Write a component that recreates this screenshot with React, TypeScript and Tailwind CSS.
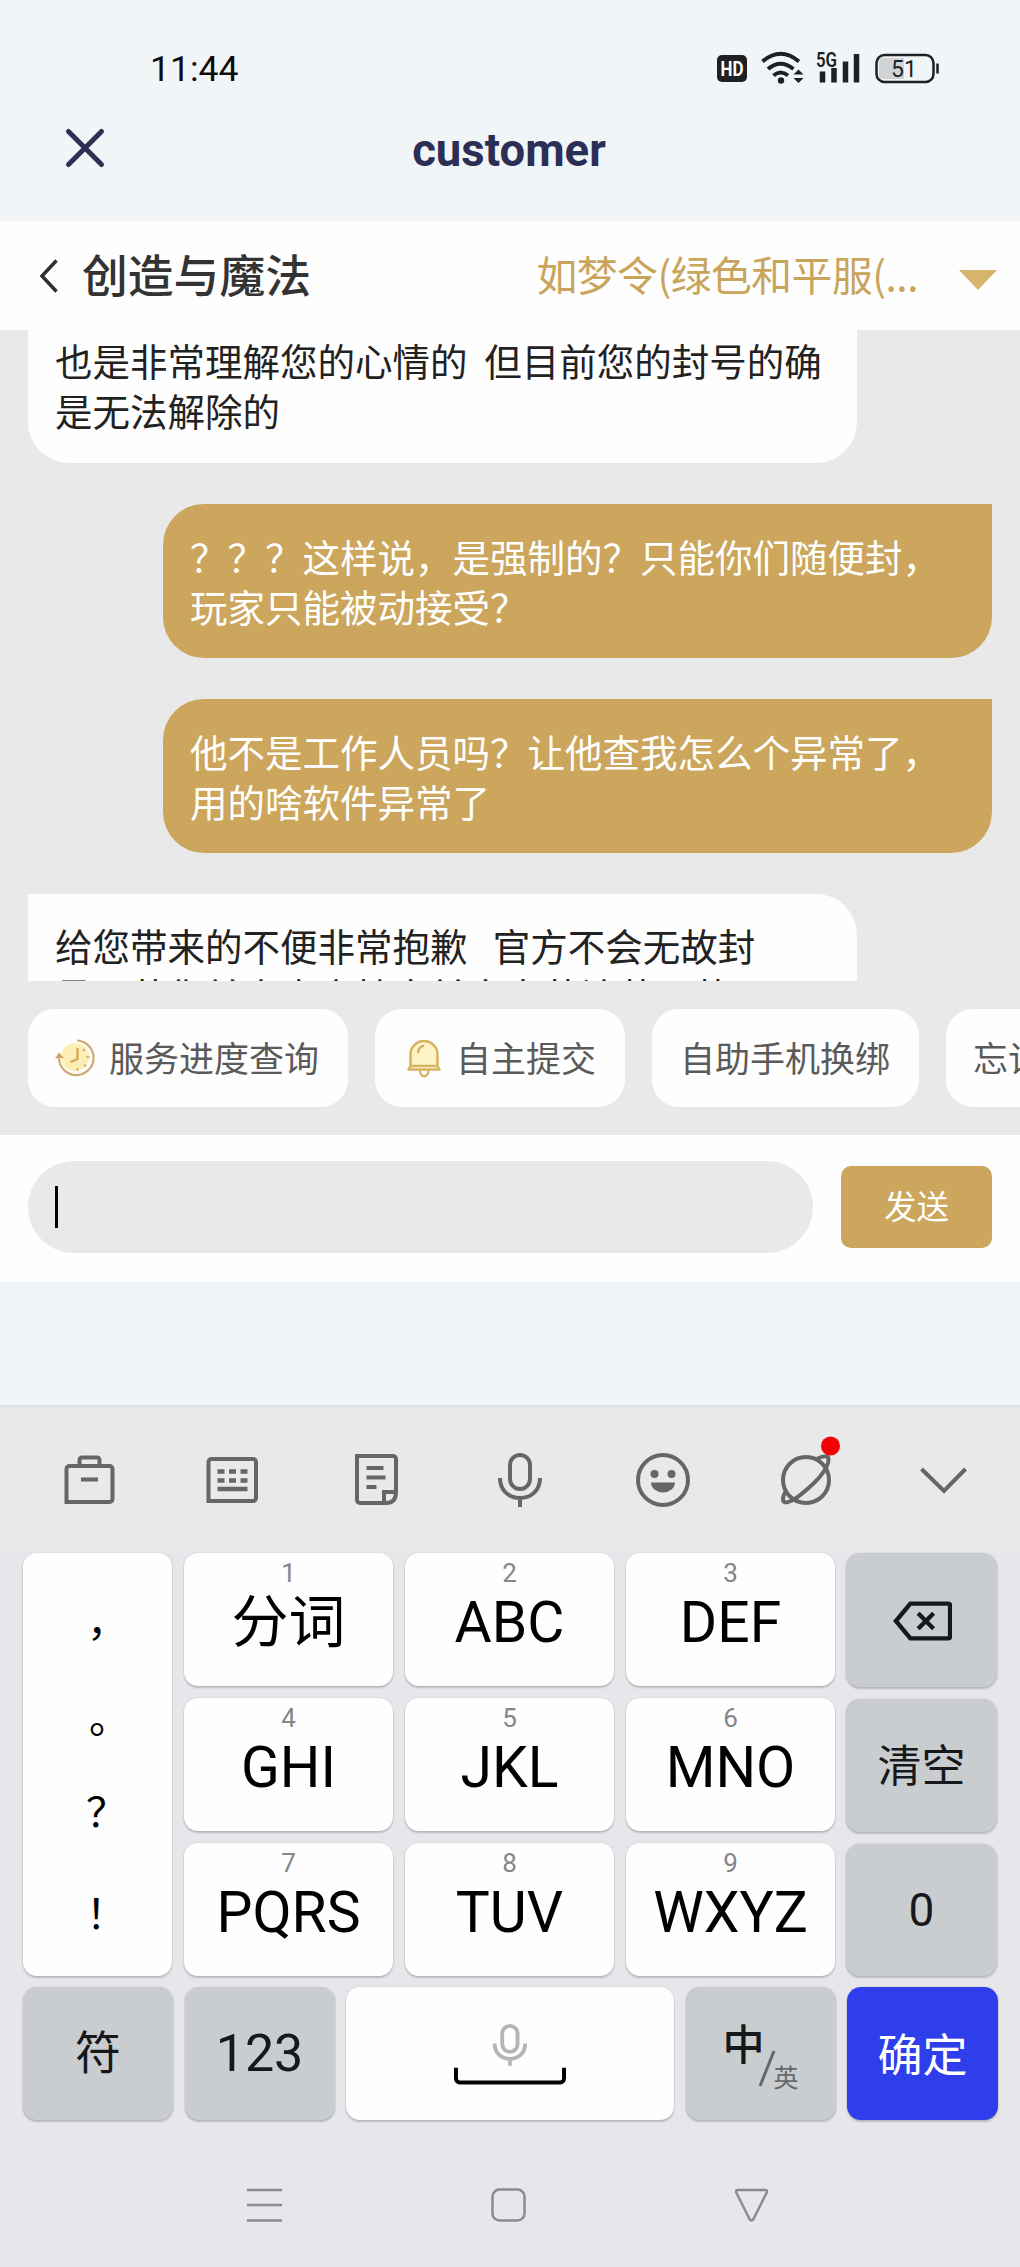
import type { ReactNode } from 'react'

const CJK = "font-['Noto_Sans_CJK_SC',sans-serif]"

interface Message {
  from: 'agent' | 'user'
  lines: string[]
}

const messages: Message[] = [
  { from: 'agent', lines: ['也是非常理解您的心情的\u00a0 但目前您的封号的确', '是无法解除的'] },
  { from: 'user', lines: ['？？？这样说，是强制的？只能你们随便封，', '玩家只能被动接受？'] },
  { from: 'user', lines: ['他不是工作人员吗？让他查我怎么个异常了，', '用的啥软件异常了'] },
  { from: 'agent', lines: ['给您带来的不便非常抱歉\u00a0 \u00a0官方不会无故封', '号，若您并方官方核实前字定若该若，若'] },
]

const letterKeys = [
  ['1', '分词'], ['2', 'ABC'], ['3', 'DEF'],
  ['4', 'GHI'], ['5', 'JKL'], ['6', 'MNO'],
  ['7', 'PQRS'], ['8', 'TUV'], ['9', 'WXYZ'],
]

function StatusBar() {
  return (
    <div className="flex h-[112px] items-start justify-between pl-[150px] pr-[81px] pt-[46px]">
      <span className="mt-[1px] text-[35.500px] leading-[44px] text-[#0c0d0e]">11:44</span>
      <svg width="224" height="44" viewBox="0 0 224 44" fill="none">
        <rect x="2" y="9" width="30" height="27" rx="5" fill="#1d2122" />
        <text x="17" y="29.500" textAnchor="middle" fontSize="20" fontWeight="700" fill="#fff" textLength="23" lengthAdjust="spacingAndGlyphs">HD</text>
        <g stroke="#1d2122" strokeWidth="4">
          <path d="M47.500 15.500Q65.500 0 84 15.500" />
          <path d="M53 23Q65.500 12.500 78.500 23" />
          <path d="M58.500 29.500Q65.500 23.500 73 29.500" />
        </g>
        <circle cx="66" cy="34.500" r="3.200" fill="#1d2122" />
        <path d="M78.500 28.500l5-5 5 5zM78.500 32l5 5 5-5z" fill="#1d2122" />
        <text x="101" y="20.500" fontSize="20" fontWeight="600" fill="#1d2122" textLength="21" lengthAdjust="spacingAndGlyphs">5G</text>
        <path d="M107.500 25.500v11M119 22v14.500M130.500 15.500v21M141.500 8v28.500" stroke="#1d2122" strokeWidth="5.500" />
        <rect x="161.500" y="9" width="57" height="27" rx="8" stroke="#1d2122" strokeWidth="2.500" />
        <path d="M168 12h21v21h-21a4 4 0 0 1-4-4v-13a4 4 0 0 1 4-4z" fill="#d0d3d6" />
        <text x="189" y="30.500" textAnchor="middle" fontSize="23" fill="#1d2122">51</text>
        <path d="M222.500 17.500v10" stroke="#1d2122" strokeWidth="2.500" />
      </svg>
    </div>
  )
}

function TitleBar() {
  return (
    <div className="grid h-[109px] grid-cols-[119px_1fr_121px] items-start">
      <svg className="ml-[64px] mt-[15px]" width="42" height="42" viewBox="0 0 42 42" fill="none" stroke="#2e3051" strokeWidth="5" strokeLinecap="round">
        <path d="M4.500 4.500l33 33M37.500 4.500l-33 33" />
      </svg>
      <h1 className="mt-[11px] text-center font-['Roboto',sans-serif] text-[45.500px] leading-[56px] font-bold text-[#2b2e55]">customer</h1>
    </div>
  )
}

function GameBar() {
  return (
    <div className={`${CJK} flex h-[109px] items-center bg-[#fefefe] pl-[39px] pr-[22px]`}>
      <svg width="20" height="36" viewBox="0 0 20 36" fill="none" stroke="#303030" strokeWidth="3.500">
        <path d="M17.500 2.500L3 18l14.500 15.500" />
      </svg>
      <span className="mt-[-5px] ml-[23px] text-[45.800px] leading-[60px] font-medium text-[#333]">创造与魔法</span>
      <span className="mt-[-4px] ml-auto text-[40.800px] leading-[60px] tracking-[-0.5px] text-[#c9a55c]">如梦令(绿色和平服(...</span>
      <svg className="ml-[40px] mt-[8px]" width="40" height="20" viewBox="0 0 40 20">
        <path d="M1 0h38L20 20z" fill="#d7b46d" />
      </svg>
    </div>
  )
}

function Bubble({ message }: { message: Message }) {
  const isUser = message.from === 'user'
  return (
    <div
      className={`w-[829px] shrink-0 px-[27px] text-[37.500px] leading-[50px] whitespace-nowrap first:pt-[76px] ${
        isUser
          ? 'self-end rounded-[41px] rounded-tr-none bg-[#cba65c] py-[27px] text-white'
          : 'self-start rounded-[41px] rounded-tl-none bg-[#fefefe] pt-[26px] pb-[28px] text-[#222]'
      }`}
    >
      {message.lines.map((line) => (
        <div key={line} className="h-[50px]">{line}</div>
      ))}
    </div>
  )
}

function HistoryIcon() {
  return (
    <svg width="42" height="42" viewBox="0 0 42 42" fill="none">
      <circle cx="20" cy="20" r="14" fill="#fdeeb5" />
      <path d="M22 3.500a17.300 17.300 0 1 1-18 18" stroke="#cfa96d" strokeWidth="2.200" />
      <path d="M0 21.500l4-6 5 5.500z" fill="#cfa469" />
      <path d="M22.500 11v11l-7 3" stroke="#d3a956" strokeWidth="2.400" />
      <path d="M30 12l-2 2M34.500 20h-3M31 29.500l-2-2M22.500 34v-3" stroke="#d3b071" strokeWidth="2" />
    </svg>
  )
}

function BellIcon() {
  return (
    <svg width="36" height="42" viewBox="0 0 36 42" fill="none">
      <path d="M4.500 31V17.500a13.500 13.500 0 0 1 27 0V31" fill="#fdf3c6" stroke="#d6b45f" strokeWidth="2.500" />
      <path d="M12 16a8 8 0 0 1 6-7.500" stroke="#cfa35c" strokeWidth="2" />
      <path d="M2.500 32.500h31l-2-3.500h-27z" fill="#fffbe9" stroke="#d6b45f" strokeWidth="2.500" strokeLinejoin="round" />
      <path d="M14 33.500c0 7.500 8.500 7.500 8.500 0" stroke="#d6b45f" strokeWidth="2.500" />
    </svg>
  )
}

function Chip({ width, icon, label }: { width: string; icon?: ReactNode; label: string }) {
  return (
    <button className={`${width} flex h-[98px] shrink-0 items-center rounded-[27px] bg-[#fefefe] text-[35px] leading-[50px] whitespace-nowrap text-[#5a5a5a]`}>
      {icon}
      <span className="mt-[-3px]">{label}</span>
    </button>
  )
}

function InputBar() {
  return (
    <div className={`${CJK} flex h-[147px] items-center gap-[28px] bg-[#fefefe] px-[28px]`}>
      <div className="mt-[-3px] flex h-[92px] flex-1 items-center rounded-full bg-[#e9e9e9] pl-[27px]">
        <div className="h-[42px] w-[3px] bg-black" />
      </div>
      <button className="mt-[-3px] h-[82px] w-[151px] rounded-[10px] bg-[#cba65c] pb-1 text-[32.600px] text-white">发送</button>
    </div>
  )
}

function MicPaths() {
  return (
    <>
      <rect x="20" y="5" width="20" height="34" rx="10" />
      <path d="M10 28c0 13 9.500 20 20 20s20-7 20-20M30 48v9" />
    </>
  )
}

function ToolIcon({ children }: { children: ReactNode }) {
  return (
    <button className="flex justify-center">
      <svg width="60" height="60" viewBox="0 0 60 60" fill="none" stroke="#666" strokeWidth="4" className="mt-[-1px] overflow-visible">
        {children}
      </svg>
    </button>
  )
}

function Toolbar() {
  return (
    <div className="grid h-[148px] grid-cols-[repeat(6,143.500px)_130px] items-center border-t-2 border-[#dcdfe3] bg-[#e9e9e9] pl-[17px]">
      <ToolIcon>
        <path d="M7.500 52V19a3 3 0 0 1 3-3h40a3 3 0 0 1 3 3v30a3 3 0 0 1-3 3zM20.500 16v-6a2.500 2.500 0 0 1 2.500-2.500h15a2.500 2.500 0 0 1 2.500 2.500v6M22 29.500h17" />
      </ToolIcon>
      <ToolIcon>
        <path d="M6.500 51V12a3 3 0 0 1 3-3h41.500a3 3 0 0 1 3 3v36a3 3 0 0 1-3 3z" />
        <path d="M15.500 21.500h30M15.500 30.500h30" strokeWidth="4.500" strokeDasharray="7 4.500" />
        <path d="M15.500 39h30" strokeWidth="4.500" />
      </ToolIcon>
      <ToolIcon>
        <path d="M11 6h36a3 3 0 0 1 3 3v33q0 11-10 11H14a3 3 0 0 1-3-3zM50 42H38v11M20.500 18h17M20.500 27.500h19M20.500 37h10" />
      </ToolIcon>
      <ToolIcon>
        <g transform="translate(1 0)">
          <MicPaths />
        </g>
      </ToolIcon>
      <ToolIcon>
        <circle cx="30" cy="30" r="25" />
        <g fill="#666" stroke="none">
          <circle cx="21.500" cy="24" r="4" />
          <circle cx="38.500" cy="24" r="4" />
          <path d="M18 32.500h24a12 10 0 0 1-24 0z" />
        </g>
      </ToolIcon>
      <ToolIcon>
        <circle cx="30" cy="30" r="23" />
        <path d="M41 9c5-3 11-4 11.500 0 .5 6-6 16-14.500 24S21 48 16 50.500c-6 3-9 2.500-9-1.500 0-3 1-5 3-8" />
        <circle cx="54.500" cy="-4" r="9.500" fill="#f40006" stroke="none" />
      </ToolIcon>
      <ToolIcon>
        <path d="M8.500 19L31 41l21.500-22" />
      </ToolIcon>
    </div>
  )
}

const keyBase = 'flex items-center justify-center rounded-[14px] shadow-[0_2px_2px_rgba(0,0,0,0.18),0_0_2px_rgba(0,0,0,0.14)]'
const grayKey = `${keyBase} bg-[#cacdd0] text-[#17181b]`
const whiteKey = `${keyBase} bg-[#fefefe] text-black`

function Keyboard() {
  return (
    <div className={`font-[Roboto,'Noto_Sans_CJK_SC',sans-serif] flex flex-col gap-[11px] pl-[23px] pr-[22px]`}>
      <div className="flex h-[423px] gap-[12px]">
        <div className={`${whiteKey} ${CJK} w-[149px] flex-col text-[41px] leading-none`}>
          <span className="mt-[10px] h-[97px] translate-x-[10px]">，</span>
          <span className="h-[94px] translate-x-[12px]">。</span>
          <span className="h-[102px] translate-x-[9px]">？</span>
          <span className="h-[51px] translate-x-[9px]">！</span>
        </div>
        <div className="grid w-[651px] grid-cols-3 grid-rows-3 gap-x-[12px] gap-y-[12px]">
          {letterKeys.map(([digit, label]) => (
            <button key={digit} className={`${whiteKey} flex-col justify-start`}>
              <span className="mt-[6px] text-[26px] leading-[28px] text-[#85858a]">{digit}</span>
              <span className="mt-[2px] text-[57px] leading-[68px]">{label}</span>
            </button>
          ))}
        </div>
        <div className="ml-[-1px] flex w-[151px] flex-col gap-[12px]">
          <button className={`${grayKey} flex-1 pt-[2px]`}>
            <svg width="60" height="42" viewBox="0 0 62 42" fill="none" stroke="#17181b" strokeWidth="4.500">
              <path d="M19 3h39a2 2 0 0 1 2 2v32a2 2 0 0 1-2 2H19L4 21z" />
              <path d="M27 13l16 16M43 13L27 29" />
            </svg>
          </button>
          <button className={`${grayKey} flex-1 pt-[2px] text-[44px]`}>清空</button>
          <button className={`${grayKey} flex-1 text-[46px]`}>0</button>
        </div>
      </div>
      <div className="flex h-[133px] gap-[11.500px]">
        <button className={`${grayKey} w-[150px] text-[46px]`}>符</button>
        <button className={`${grayKey} w-[150px] text-[52px]`}>123</button>
        <button className={`${whiteKey} flex-1`}>
          <svg width="112" height="66" viewBox="0 0 114 66" fill="none">
            <g transform="translate(33.500 .5) scale(.78)" stroke="#b5b5b7" strokeWidth="5">
              <MicPaths />
            </g>
            <path d="M2 47v11a4 4 0 0 0 4 4h102a4 4 0 0 0 4-4V47" stroke="#000" strokeWidth="4" />
          </svg>
        </button>
        <button className={`${grayKey} relative w-[150px]`}>
          <span className="absolute top-[34px] left-[37px] text-[42px] leading-[50px] font-medium">中</span>
          <svg className="absolute top-[62px] left-[71px]" width="20" height="40" viewBox="0 0 20 40" stroke="#66686b" strokeWidth="3">
            <path d="M17 2L3 37" />
          </svg>
          <span className="absolute top-[77px] left-[88px] text-[25px] leading-[30px] text-[#66686b]">英</span>
        </button>
        <button className={`${keyBase} w-[151px] bg-[#2f3eeb] pt-[6px] text-[45px] text-white`}>确定</button>
      </div>
    </div>
  )
}

function NavBar() {
  return (
    <div className="flex items-center justify-between pt-[65px] pr-[250px] pl-[246px]">
      <svg width="37" height="40" viewBox="0 0 37 40" stroke="#8b8a90" strokeWidth="2.500">
        <path d="M1 5h35M1 20h35M1 35.500h35" />
      </svg>
      <svg width="37" height="40" viewBox="0 0 37 40" fill="none" stroke="#8b8a90" strokeWidth="2.500">
        <rect x="2.500" y="4.500" width="32" height="31" rx="7" />
      </svg>
      <svg width="37" height="40" viewBox="0 0 37 40" fill="none" stroke="#8b8a90" strokeWidth="2.500" strokeLinejoin="round">
        <path d="M5 5h27q3 0 1.500 3L20.500 34q-2 3-4 0L3.500 8q-1.500-3 1.500-3z" />
      </svg>
    </div>
  )
}

export default function App() {
  return (
    <div className="h-[2267px] w-[1020px] overflow-hidden bg-[#f1f5f8] font-['Roboto',sans-serif]">
      <StatusBar />
      <TitleBar />
      <GameBar />

      {/* Conversation, scrolled to the latest message */}
      <div className={`${CJK} h-[805px] bg-[#e9e9e9]`}>
        <div className="h-[651px] overflow-hidden px-[28px]">
          <div className="mt-[-71px] flex flex-col gap-[41px]">
            {messages.map((m) => <Bubble key={m.lines[0]} message={m} />)}
          </div>
        </div>
        <div className="mt-[28px] flex gap-[27px] overflow-hidden pl-[28px]">
          <Chip width="w-[320px] pl-[27px] gap-[12px]" icon={<HistoryIcon />} label="服务进度查询" />
          <Chip width="w-[250px] pl-[31px] gap-[14px]" icon={<BellIcon />} label="自主提交" />
          <Chip width="w-[267px] pl-[28px]" label="自助手机换绑" />
          <Chip width="w-[267px] pl-[27px]" label="忘记密码" />
        </div>
      </div>

      <InputBar />

      <div className="h-[123px]" />
      <div className="h-[862px] bg-[#e7e6eb]">
        <Toolbar />
        <Keyboard />
        <NavBar />
      </div>
    </div>
  )
}
